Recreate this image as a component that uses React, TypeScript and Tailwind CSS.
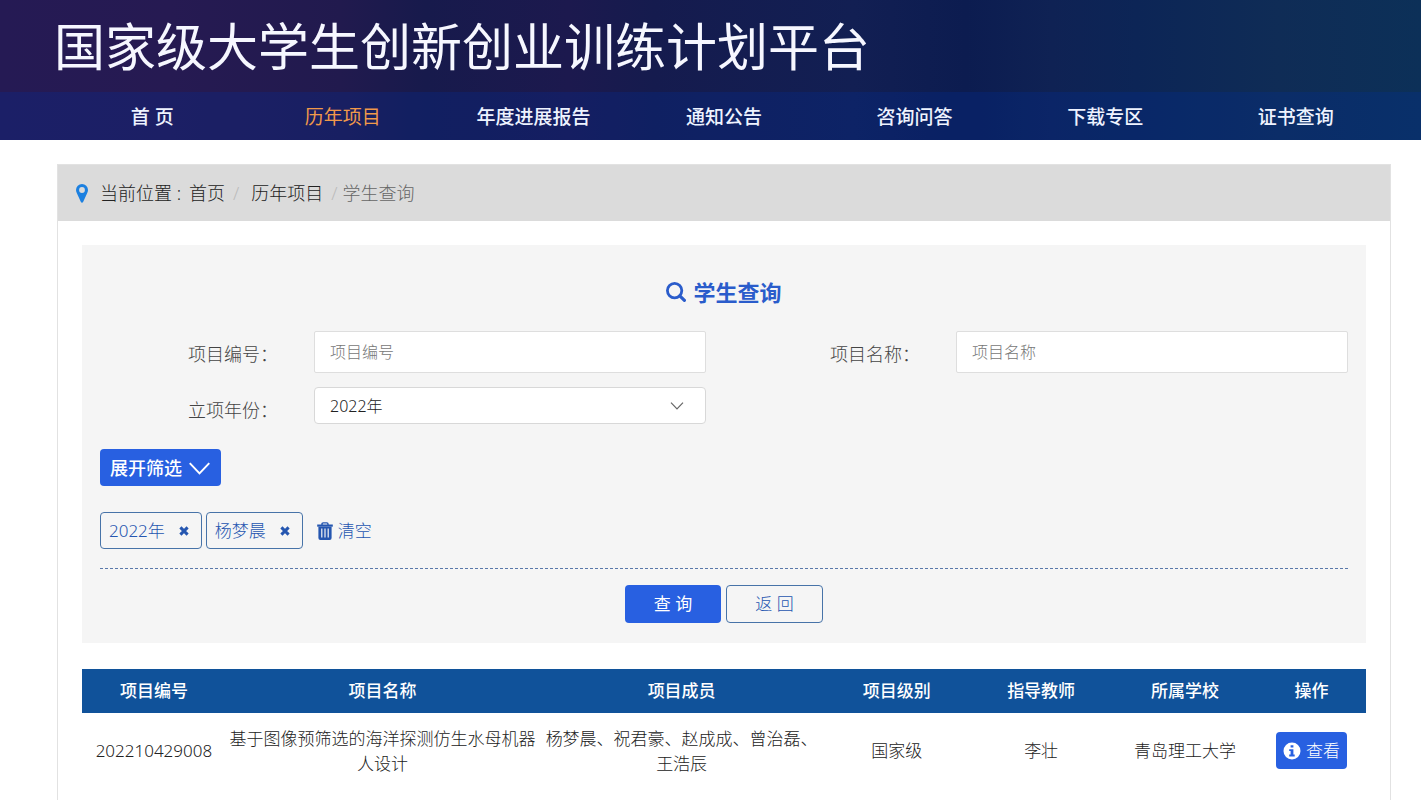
import React from "react";

const navItems = ["首 页", "历年项目", "年度进展报告", "通知公告", "咨询问答", "下载专区", "证书查询"];

const columns = [
  { title: "项目编号", width: "w-[11.2%]" },
  { title: "项目名称", width: "w-[24.4%]" },
  { title: "项目成员", width: "w-[22.2%]" },
  { title: "项目级别", width: "w-[11.3%]" },
  { title: "指导教师", width: "w-[11.2%]" },
  { title: "所属学校", width: "w-[11.2%]" },
  { title: "操作", width: "w-[8.5%]" },
];

const rows = [
  [
    "202210429008",
    "基于图像预筛选的海洋探测仿生水母机器人设计",
    "杨梦晨、祝君豪、赵成成、曾治磊、王浩辰",
    "国家级",
    "李壮",
    "青岛理工大学",
  ],
];

function PinIcon() {
  return (
    <svg viewBox="0 0 12 19" className="h-[19px] w-3 text-[#1c80e0]" fill="currentColor" aria-hidden="true">
      <path
        fillRule="evenodd"
        d="M6 0A6 6 0 0 0 0 6C0 7.4.4 8.4 1 9.6L4.9 17.9Q5.3 18.7 6 18.7T7.1 17.9L11 9.6C11.6 8.4 12 7.4 12 6A6 6 0 0 0 6 0ZM6 3.1A2.9 2.9 0 1 1 6 8.9A2.9 2.9 0 1 1 6 3.1Z"
      />
    </svg>
  );
}

function SearchIcon() {
  return (
    <svg viewBox="0 0 20 20" className="size-5" fill="none" stroke="currentColor" aria-hidden="true">
      <circle cx="8.6" cy="8.6" r="7.2" strokeWidth="2.8" />
      <path d="M13.8 13.8 18.4 18.4" strokeWidth="3.2" strokeLinecap="round" />
    </svg>
  );
}

function CrossIcon() {
  return (
    <svg viewBox="0 0 10 10" className="size-[10px]" fill="none" stroke="currentColor" aria-hidden="true">
      <path d="M1.4 1.4 8.6 8.6M8.6 1.4 1.4 8.6" strokeWidth="3" />
    </svg>
  );
}

function TrashIcon() {
  return (
    <svg viewBox="0 0 16 18" className="h-[18px] w-4" fill="none" stroke="currentColor" aria-hidden="true">
      <path d="M5 3V2Q5 .9 6.1 .9H9.9Q11 .9 11 2V3" strokeWidth="1.4" />
      <path d="M.2 2.5H15.8V4.7H.2Z" fill="currentColor" stroke="none" />
      <path
        d="M1.4 4.7H14.6V16Q14.6 18 12.6 18H3.4Q1.4 18 1.4 16ZM4.2 6.6V15.4H5.4V6.6ZM7.4 6.6V15.4H8.6V6.6ZM10.6 6.6V15.4H11.8V6.6Z"
        fill="currentColor"
        fillRule="evenodd"
        stroke="none"
      />
    </svg>
  );
}

function InfoIcon() {
  return (
    <svg viewBox="0 0 18 18" className="size-[18px]" fill="currentColor" aria-hidden="true">
      <path
        fillRule="evenodd"
        d="M9 .5A8.5 8.5 0 1 0 9 17.5A8.5 8.5 0 1 0 9 .5ZM7.6 3.2H10.4V5.6H7.6ZM6.2 7.2H10.4V12.6H11.7V14.5H6.2V12.6H7.6V9.1H6.2Z"
      />
    </svg>
  );
}

function Chevron({ className }: { className: string }) {
  return (
    <svg viewBox="0 0 20 12" className={className} fill="none" stroke="currentColor" aria-hidden="true">
      <path d="M1 1 10 10.5 19 1" strokeWidth="1.8" />
    </svg>
  );
}

function Field({ id, label, children }: { id: string; label: string; children: React.ReactNode }) {
  return (
    <div className="grid grid-cols-3">
      <label htmlFor={id} className="px-[18px] pt-[9px] text-right text-lg text-[#444]">
        {label}
      </label>
      <div className="col-span-2 px-[18px]">{children}</div>
    </div>
  );
}

function Tag({ text }: { text: string }) {
  return (
    <button
      type="button"
      className="flex h-[37px] items-center gap-[14px] rounded border border-[#4773a8] pr-3 pl-2 text-[#2556b0]"
    >
      {text}
      <CrossIcon />
    </button>
  );
}

export default function App() {
  return (
    <div className="min-h-screen bg-white font-['Noto_Sans','Noto_Sans_CJK_SC',sans-serif] text-[17px] font-light text-[#222]">
      <header className="bg-[linear-gradient(90deg,#251a54_0%,#261a52_12%,#211a4e_24%,#171a4c_30%,#1c194e_40%,#151b4e_46%,#121f53_60%,#0c1c50_68%,#0f2254_74%,#0c2556_80%,#0f2c56_90%,#0c3058_100%)]">
        <h1 className="h-[92px] pt-[10px] pl-[54px] text-[51px] leading-[72px] font-normal text-[#f6f7ff]">
          国家级大学生创新创业训练计划平台
        </h1>
        <nav className="bg-[#0030a040] pr-[30px] pl-[57px]">
          <ul className="grid grid-cols-7">
            {navItems.map((item) => (
              <li key={item}>
                <a
                  href="#"
                  className={
                    item === "历年项目"
                      ? "block h-12 text-center text-[19px] leading-[50px] font-normal text-[#f0994a]"
                      : "block h-12 text-center text-[19px] leading-[50px] font-medium text-[#eef3ff]"
                  }
                >
                  {item}
                </a>
              </li>
            ))}
          </ul>
        </nav>
      </header>

      <main className="mt-6 mr-[30px] ml-[57px] border border-[#e2e2e2]">
        <nav aria-label="当前位置" className="flex h-14 items-center bg-[#dbdbdb] pl-[18px] text-lg">
          <PinIcon />
          <span className="ml-3">当前位置 :</span>
          <a href="#" className="ml-2">首页</a>
          <span className="mx-2 text-[#bbb]">/</span>
          <a href="#" className="ml-1">历年项目</a>
          <span className="mr-[5px] ml-2 text-[#bbb]">/</span>
          <span className="text-[#666]">学生查询</span>
        </nav>

        <div className="p-6">
          <form className="bg-[#f5f5f5] pt-[31px] pb-5" onSubmit={(e) => e.preventDefault()}>
            <h2 className="flex items-center justify-center gap-[7px] text-[22px] leading-8 font-bold text-[#2a5ccb]">
              <SearchIcon />
              学生查询
            </h2>
            <div className="mt-[23px] grid grid-cols-2 gap-y-[14px]">
              <Field id="code" label="项目编号：">
                <input
                  id="code"
                  placeholder="项目编号"
                  className="h-[42px] w-full rounded-xs border border-[#dedede] bg-white px-[15px] text-base placeholder:text-[#777]"
                />
              </Field>
              <Field id="name" label="项目名称：">
                <input
                  id="name"
                  placeholder="项目名称"
                  className="h-[42px] w-full rounded-xs border border-[#dedede] bg-white px-[15px] text-base placeholder:text-[#777]"
                />
              </Field>
              <Field id="year" label="立项年份：">
                <div className="relative">
                  <select
                    id="year"
                    defaultValue="2022"
                    className="block h-[37px] w-full appearance-none rounded border border-[#d8d8d8] bg-white px-[15px] text-base"
                  >
                    <option value="2022">2022年</option>
                  </select>
                  <Chevron className="pointer-events-none absolute top-[15px] right-[22px] h-2 w-[14px] text-[#666]" />
                </div>
              </Field>
            </div>

            <div className="mx-[18px] mt-[25px] border-b border-dashed border-[#5a78aa] pb-[19px]">
              <button
                type="button"
                className="flex h-[37px] items-center gap-[6px] rounded bg-[#2860e1] px-[10px] text-lg font-medium text-white"
              >
                展开筛选
                <Chevron className="h-[14px] w-[23px] pt-px" />
              </button>
              <div className="mt-[26px] flex items-center gap-1">
                <Tag text="2022年" />
                <Tag text="杨梦晨" />
                <button type="button" className="ml-[10px] flex items-center gap-[5px] text-[#2556b0]">
                  <TrashIcon />
                  清空
                </button>
              </div>
            </div>

            <div className="mt-4 flex justify-center gap-[5px]">
              <button type="submit" className="h-[38px] w-24 rounded bg-[#2860e1] font-normal text-white">
                查 询
              </button>
              <button type="button" className="h-[38px] w-[97px] rounded border border-[#4773a8] text-[#2556b0]">
                返 回
              </button>
            </div>
          </form>

          <table className="mt-[26px] w-full table-fixed text-center">
            <thead>
              <tr className="h-11 bg-[#10529a] text-white">
                {columns.map((c) => (
                  <th key={c.title} scope="col" className={`${c.width} font-medium`}>
                    {c.title}
                  </th>
                ))}
              </tr>
            </thead>
            <tbody>
              {rows.map((row) => (
                <tr key={row[0]} className="h-[75px] leading-[25px]">
                  {row.map((cell) => (
                    <td key={cell} className="px-[3px]">
                      {cell}
                    </td>
                  ))}
                  <td>
                    <button
                      type="button"
                      className="inline-flex h-[37px] items-center gap-[5px] rounded bg-[#2860e1] px-[7px] align-middle text-white"
                    >
                      <InfoIcon />
                      查看
                    </button>
                  </td>
                </tr>
              ))}
            </tbody>
          </table>
        </div>
      </main>
    </div>
  );
}
